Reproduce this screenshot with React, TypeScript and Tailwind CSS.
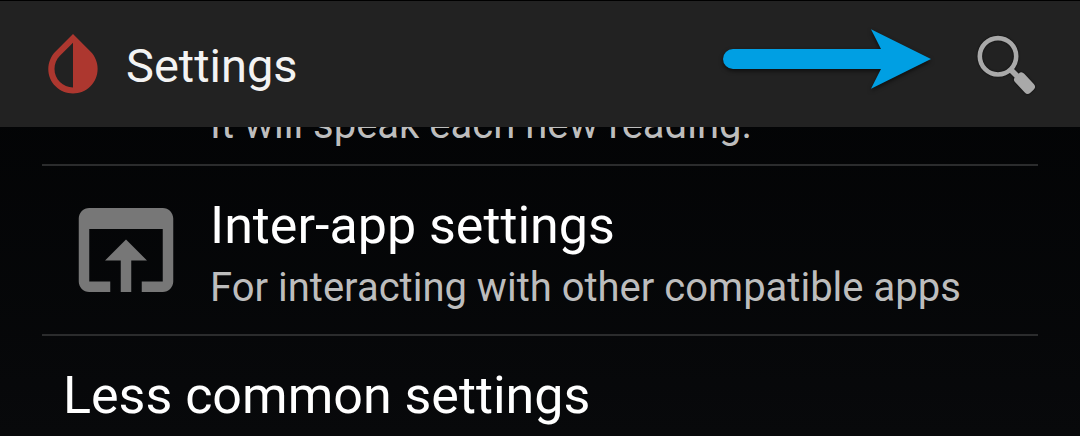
import React from "react";

function DropIcon() {
  return (
    <svg viewBox="0 0 24 24" className="size-[74px] shrink-0 fill-[#ad372f]" aria-hidden="true">
      <path d="M17.66 7.93L12 2.27 6.34 7.93c-3.12 3.12-3.12 8.19 0 11.31C7.9 20.8 9.95 21.58 12 21.58c2.05 0 4.1-.78 5.66-2.34 3.12-3.12 3.12-8.19 0-11.31zM12 19.59c-1.6 0-3.11-.62-4.24-1.76C6.62 16.69 6 15.19 6 13.59s.62-3.11 1.76-4.24L12 5.1v14.49z" />
    </svg>
  );
}

function ArrowIcon() {
  return (
    <svg
      viewBox="0 0 208 60"
      className="mb-[10px] ml-auto h-[60px] w-[208px] shrink-0 overflow-visible fill-[#009fe3] drop-shadow-[0_2px_2px_rgba(0,0,0,0.6)]"
      aria-hidden="true"
    >
      <path d="M10 20H158L148 .3 208 30 148 59.7 158 40H10A10 10 0 0 1 10 20Z" />
    </svg>
  );
}

function SearchIcon() {
  return (
    <svg viewBox="0 0 64 64" className="size-16 drop-shadow-[0_0_1px_rgba(0,0,0,0.7)]" aria-hidden="true">
      <circle cx="24" cy="24.3" r="18.2" fill="none" stroke="#a9a9a9" strokeWidth="4.6" />
      <path d="M36 37l8 8" stroke="#a9a9a9" strokeWidth="5.6" />
      <rect x="39.5" y="45" width="22" height="12.4" rx="4" fill="#a9a9a9" transform="rotate(47 50.5 51.2)" />
    </svg>
  );
}

function OpenInAppIcon() {
  return (
    <svg viewBox="0 0 24 24" className="size-[126px] shrink-0 fill-[#777777]" aria-hidden="true">
      <path d="M19 4H5c-1.11 0-2 .9-2 2v12c0 1.1.89 2 2 2h4v-2H5V8h14v10h-4v2h4c1.1 0 2-.9 2-2V6c0-1.100-.89-2-2-2zm-7 6l-4 4h3v6h2v-6h3l-4-4z" />
    </svg>
  );
}

export default function App() {
  return (
    <div className="flex min-h-screen flex-col bg-linear-to-b from-[#020304] to-[#08090b] font-['Roboto',sans-serif] text-white">
      <header className="flex h-[127px] items-center border-t border-black bg-[#222222] pr-[42px] pl-9">
        <DropIcon />
        <h1 className="pt-1 pl-4 text-[47px] leading-[56px] text-[#f3f3f3]">Settings</h1>
        <ArrowIcon />
        <button type="button" aria-label="Search" className="ml-[43px] shrink-0">
          <SearchIcon />
        </button>
      </header>

      <main className="mx-[42px]">
        <ul className="divide-y-2 divide-[#2b2c2d]">
          <li className="flex h-[39px] flex-col justify-end overflow-hidden pb-3 pl-[168px]">
            <p className="shrink-0 text-[40px] leading-[54px] text-[#bdbdbd]">It will speak each new reading.</p>
          </li>
          <li>
            <a href="#inter-app" className="flex items-center pl-[21px]">
              <OpenInAppIcon />
              <div className="pt-[25px] pb-[19px] pl-[21px]">
                <h2 className="text-[52px] leading-[70px]">Inter-app settings</h2>
                <p className="text-[40px] leading-[54px] text-[#bdbdbd]">For interacting with other compatible apps</p>
              </div>
            </a>
          </li>
          <li>
            <a href="#less-common" className="block pt-[25px] pl-[21px]">
              <h2 className="text-[52px] leading-[70px]">Less common settings</h2>
            </a>
          </li>
        </ul>
      </main>
    </div>
  );
}
